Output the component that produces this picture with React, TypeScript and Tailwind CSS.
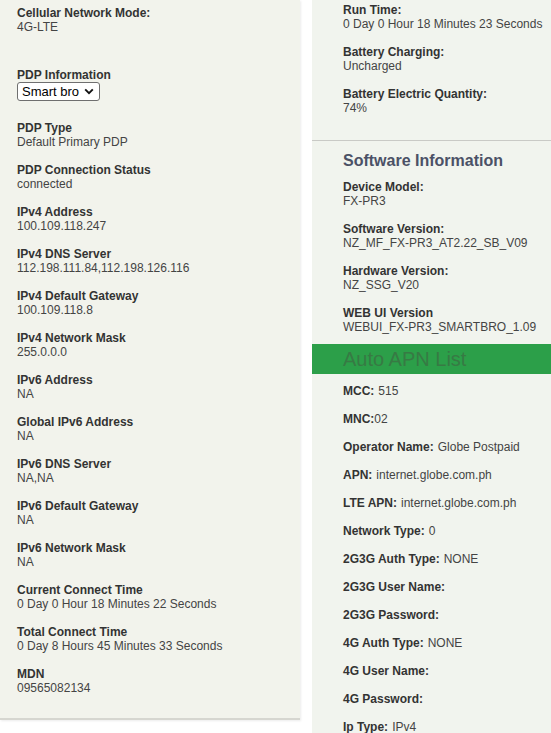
import React from "react";

type Item = { label: string; value: string };

const leftItems: Item[] = [
  { label: "PDP Type", value: "Default Primary PDP" },
  { label: "PDP Connection Status", value: "connected" },
  { label: "IPv4 Address", value: "100.109.118.247" },
  { label: "IPv4 DNS Server", value: "112.198.111.84,112.198.126.116" },
  { label: "IPv4 Default Gateway", value: "100.109.118.8" },
  { label: "IPv4 Network Mask", value: "255.0.0.0" },
  { label: "IPv6 Address", value: "NA" },
  { label: "Global IPv6 Address", value: "NA" },
  { label: "IPv6 DNS Server", value: "NA,NA" },
  { label: "IPv6 Default Gateway", value: "NA" },
  { label: "IPv6 Network Mask", value: "NA" },
  { label: "Current Connect Time", value: "0 Day 0 Hour 18 Minutes 22 Seconds" },
  { label: "Total Connect Time", value: "0 Day 8 Hours 45 Minutes 33 Seconds" },
  { label: "MDN", value: "09565082134" },
];

const statusItems: Item[] = [
  { label: "Run Time:", value: "0 Day 0 Hour 18 Minutes 23 Seconds" },
  { label: "Battery Charging:", value: "Uncharged" },
  { label: "Battery Electric Quantity:", value: "74%" },
];

const softwareItems: Item[] = [
  { label: "Device Model:", value: "FX-PR3" },
  { label: "Software Version:", value: "NZ_MF_FX-PR3_AT2.22_SB_V09" },
  { label: "Hardware Version:", value: "NZ_SSG_V20" },
  { label: "WEB UI Version", value: "WEBUI_FX-PR3_SMARTBRO_1.09" },
];

const apnItems: { label: string; value: string; tight?: boolean }[] = [
  { label: "MCC:", value: "515" },
  { label: "MNC:", value: "02", tight: true },
  { label: "Operator Name:", value: "Globe Postpaid" },
  { label: "APN:", value: "internet.globe.com.ph" },
  { label: "LTE APN:", value: "internet.globe.com.ph" },
  { label: "Network Type:", value: "0" },
  { label: "2G3G Auth Type:", value: "NONE" },
  { label: "2G3G User Name:", value: "" },
  { label: "2G3G Password:", value: "" },
  { label: "4G Auth Type:", value: "NONE" },
  { label: "4G User Name:", value: "" },
  { label: "4G Password:", value: "" },
  { label: "Ip Type:", value: "IPv4" },
];

function Field({ item }: { item: Item }) {
  return (
    <div className="mb-[14px]">
      <div className="font-bold text-[#333]">{item.label}</div>
      <div className="text-[#444]">{item.value}</div>
    </div>
  );
}

export default function App() {
  return (
    <div className="flex h-[733px] overflow-hidden bg-white font-['Liberation_Sans',Arial,sans-serif] text-[12px] leading-[14px]">
      {/* left: connection info */}
      <div className="w-[300px] shrink-0 self-start bg-[#f2f3ec] border-b-2 border-[#d6d6d0] shadow-[1px_1px_2px_rgba(0,0,0,0.08)] pl-[17px] pt-[6px] pb-[9px]">
        <Field item={{ label: "Cellular Network Mode:", value: "4G-LTE" }} />
        <div className="mt-[34px] mb-[20px]">
          <div className="font-bold text-[#333]">PDP Information</div>
          <div className="flex items-center gap-[5px] w-[83px] h-[19px] border border-[#6f6f6f] rounded-[3px] bg-white pl-[4px] text-[13px] leading-[15px] text-black">
            <span>Smart bro</span>
            <svg width="10" height="7" viewBox="0 0 10 7" fill="none">
              <path d="M1.2 1.4 5 5.2 8.8 1.4" stroke="#111" strokeWidth="1.9" />
            </svg>
          </div>
        </div>
        {leftItems.map((it) => (
          <Field key={it.label} item={it} />
        ))}
      </div>

      <div className="w-[12px] shrink-0" />

      {/* right: device info */}
      <div className="flex-1 bg-[#f1f4ee]">
        <div className="pl-[31px] pt-[3px] pb-[11px]">
          {statusItems.map((it) => (
            <Field key={it.label} item={it} />
          ))}
        </div>
        <div className="border-t border-[#c9cac6] pl-[31px] pt-[10px]">
          <h2 className="text-[16px] leading-[19px] font-bold text-[#4b5166] mb-[10px]">Software Information</h2>
          {softwareItems.map((it, i) => (
            <div key={it.label} className={i === softwareItems.length - 1 ? "mb-[10px]" : "mb-[14px]"}>
              <div className="font-bold text-[#333]">{it.label}</div>
              <div className="text-[#444]">{it.value}</div>
            </div>
          ))}
        </div>
        <div className="h-[30px] bg-[#2c9f49] pl-[31px] flex items-center">
          <span className="text-[20px] leading-[22px] text-[#377a44]">Auto APN List</span>
        </div>
        <div className="pl-[31px] pt-[10px]">
          {apnItems.map((it) => (
            <div key={it.label} className="mb-[14px] flex">
              <span className="font-bold text-[#333]">{it.label}</span>
              {it.value && <span className={`text-[#444] ${it.tight ? "" : "ml-[4px]"}`}>{it.value}</span>}
            </div>
          ))}
        </div>
      </div>
    </div>
  );
}
